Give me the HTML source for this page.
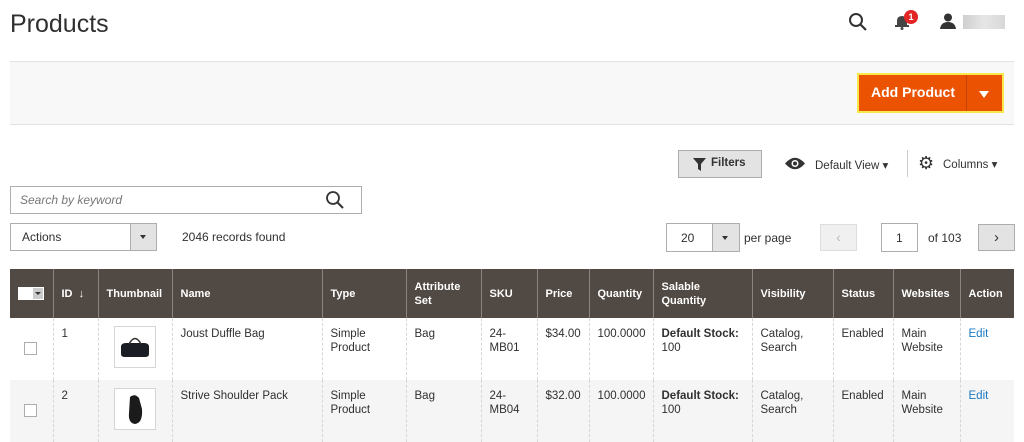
<!DOCTYPE html>
<html><head><meta charset="utf-8"><style>
*{box-sizing:border-box;margin:0;padding:0}
body{width:1024px;height:442px;overflow:hidden;background:#fff;font-family:"Liberation Sans",sans-serif;color:#303030;position:relative;font-size:12px}
.a{position:absolute}
.box{position:absolute;border:1px solid #adadad;background:#fff}
table{position:absolute;left:10px;top:269px;width:1004px;border-collapse:collapse;table-layout:fixed}
th{background:#514943;color:#fff;font-weight:bold;font-size:11px;text-align:left;padding:0 8px;height:49px;border-left:1px solid #8a837f;line-height:14px}
th:first-child{border-left:none}
td{font-size:11.5px;vertical-align:top;padding:9px 8px;height:62px;border-left:1px dashed #d6d6d6;line-height:14px;color:#303030}
td:first-child{border-left:none}
tr.r2 td{background:#f5f5f5}
.cb{width:13px;height:13px;border:1px solid #adadad;background:#fff;margin:16px 0 0 8px}
.th{width:42px;height:42px;border:1px solid #d6d6d6;background:#fff;margin-left:8px;position:relative}
</style></head><body>
<div class="a" style="left:10px;top:10px;font-size:25px;color:#303030">Products</div>
<svg class="a" style="left:848px;top:12px" width="20" height="20" viewBox="0 0 20 20"><circle cx="8" cy="8" r="6" fill="none" stroke="#333" stroke-width="2"/><line x1="12.5" y1="12.5" x2="18" y2="18" stroke="#333" stroke-width="2.2"/></svg>
<svg class="a" style="left:894px;top:14px" width="16" height="16" viewBox="0 0 16 16"><path d="M3 12 L3 7 Q3 2 8 2 Q13 2 13 7 L13 12 Z" fill="#444"/><rect x="1" y="11" width="14" height="2" fill="#444"/><circle cx="8" cy="14.5" r="1.5" fill="#444"/></svg>
<div class="a" style="left:904px;top:10px;width:14px;height:14px;border-radius:7px;background:#e22626;color:#fff;font-size:9px;font-weight:bold;text-align:center;line-height:14px">1</div>
<svg class="a" style="left:940px;top:13px" width="16" height="16" viewBox="0 0 16 16"><circle cx="8" cy="4.5" r="4" fill="#333"/><path d="M0 16 Q1 9 8 9 Q15 9 16 16Z" fill="#333"/></svg>
<div class="a" style="left:963px;top:15px;width:42px;height:14px;background:linear-gradient(90deg,#cfcfcf,#e6e6e6 50%,#d8d8d8)"></div>
<div class="a" style="left:10px;top:61px;width:1004px;height:64px;background:#f8f8f8;border-top:1px solid #e3e3e3;border-bottom:1px solid #e3e3e3"></div>
<div class="a" style="left:857px;top:73px;width:147px;height:40px;background:#eb5202;border:2px solid #f9e84a"></div>
<div class="a" style="left:871px;top:84px;color:#fff;font-weight:bold;font-size:14px">Add Product</div>
<div class="a" style="left:966px;top:75px;width:1px;height:36px;background:#c04500"></div>
<div class="a" style="left:979px;top:91px;border-left:5px solid transparent;border-right:5px solid transparent;border-top:7px solid #fff"></div>
<div class="a" style="left:678px;top:150px;width:84px;height:28px;background:#e3e3e3;border:1px solid #adadad"></div>
<svg class="a" style="left:693px;top:158px" width="13" height="13" viewBox="0 0 13 13"><path d="M0 0H13L8 6V13L5 11V6Z" fill="#333"/></svg>
<div class="a" style="left:711px;top:157px;font-size:11.5px;font-weight:bold;color:#333">Filters</div>
<svg class="a" style="left:785px;top:157px" width="20" height="13" viewBox="0 0 20 13"><path d="M0 6.5Q10 -5 20 6.5Q10 18 0 6.5Z" fill="#333"/><circle cx="10" cy="6.5" r="3.5" fill="#fff"/><circle cx="10" cy="6.5" r="2" fill="#333"/></svg>
<div class="a" style="left:815px;top:158px;font-size:11.5px;color:#333">Default View ▾</div>
<div class="a" style="left:907px;top:150px;width:1px;height:27px;background:#ccc"></div>
<div class="a" style="left:918px;top:153px;font-size:18px;color:#333;line-height:20px">⚙</div>
<div class="a" style="left:943px;top:157px;font-size:11.5px;color:#333">Columns ▾</div>
<div class="box" style="left:10px;top:186px;width:352px;height:28px"></div>
<div class="a" style="left:20px;top:193px;font-style:italic;color:#777;font-size:12px">Search by keyword</div>
<svg class="a" style="left:325px;top:190px" width="20" height="20" viewBox="0 0 20 20"><circle cx="8" cy="8" r="6" fill="none" stroke="#333" stroke-width="1.8"/><line x1="12.5" y1="12.5" x2="18" y2="18" stroke="#333" stroke-width="2"/></svg>
<div class="box" style="left:10px;top:223px;width:147px;height:28px"></div>
<div class="a" style="left:130px;top:224px;width:26px;height:26px;background:#e3e3e3;border-left:1px solid #adadad"></div>
<div class="a" style="left:22px;top:230px;font-size:12px">Actions</div>
<div class="a" style="left:140px;top:235px;border-left:3.5px solid transparent;border-right:3.5px solid transparent;border-top:4px solid #333"></div>
<div class="a" style="left:182px;top:230px;font-size:12px">2046 records found</div>
<div class="box" style="left:666px;top:223px;width:74px;height:29px"></div>
<div class="a" style="left:712px;top:224px;width:27px;height:27px;background:#e3e3e3;border-left:1px solid #adadad"></div>
<div class="a" style="left:681px;top:231px;font-size:12px">20</div>
<div class="a" style="left:722px;top:236px;border-left:3.5px solid transparent;border-right:3.5px solid transparent;border-top:4px solid #333"></div>
<div class="a" style="left:744px;top:231px;font-size:12px">per page</div>
<div class="a" style="left:820px;top:224px;width:37px;height:27px;background:#f0f0f0;border:1px solid #ddd;color:#bbb;text-align:center;line-height:25px;font-size:14px">&lsaquo;</div>
<div class="box" style="left:881px;top:223px;width:37px;height:29px"></div>
<div class="a" style="left:896px;top:231px;font-size:12px">1</div>
<div class="a" style="left:928px;top:231px;font-size:12px">of 103</div>
<div class="a" style="left:978px;top:224px;width:37px;height:27px;background:#e3e3e3;border:1px solid #adadad;color:#333;text-align:center;line-height:25px;font-size:15px">&rsaquo;</div>
<table>
<colgroup><col style="width:43px"><col style="width:45px"><col style="width:74px"><col style="width:150px"><col style="width:84px"><col style="width:75px"><col style="width:56px"><col style="width:52px"><col style="width:64px"><col style="width:99px"><col style="width:81px"><col style="width:60px"><col style="width:67px"><col style="width:54px"></colgroup>
<tr><th><span style="display:inline-block;width:26px;height:13px;background:#fff;position:relative;vertical-align:middle"><span style="position:absolute;right:1px;top:1px;width:10px;height:11px;background:#ccc"></span><span style="position:absolute;right:3px;top:5px;border-left:3px solid transparent;border-right:3px solid transparent;border-top:3px solid #333"></span></span></th><th>ID &nbsp;↓</th><th>Thumbnail</th><th>Name</th><th>Type</th><th>Attribute Set</th><th>SKU</th><th>Price</th><th>Quantity</th><th>Salable Quantity</th><th>Visibility</th><th>Status</th><th>Websites</th><th>Action</th></tr>
<tr><td style="padding:0"><div class="cb" style="margin-top:24px;margin-left:14px"></div></td><td>1</td><td style="padding:0"><div class="th" style="margin:8px 0 0 15px"><svg width="40" height="40" viewBox="0 0 40 40"><path d="M6 20Q6 16 11 16H29Q34 16 34 20V27Q34 30 30 30H10Q6 30 6 27Z" fill="#1b1d25"/><path d="M14 17Q20 6 26 17" fill="none" stroke="#333" stroke-width="1.5"/></svg></div></td><td>Joust Duffle Bag</td><td>Simple Product</td><td>Bag</td><td>24-<br>MB01</td><td>$34.00</td><td>100.0000</td><td><b>Default Stock:</b><br>100</td><td>Catalog, Search</td><td>Enabled</td><td>Main Website</td><td style="color:#1979c3">Edit</td></tr>
<tr class="r2"><td style="padding:0"><div class="cb" style="margin-top:24px;margin-left:14px"></div></td><td>2</td><td style="padding:0"><div class="th" style="margin:8px 0 0 15px"><svg width="40" height="40" viewBox="0 0 40 40"><path d="M15 8Q20 4 24 9L27 20Q28 34 20 35Q13 34 14 24Z" fill="#1b1b1b"/></svg></div></td><td>Strive Shoulder Pack</td><td>Simple Product</td><td>Bag</td><td>24-<br>MB04</td><td>$32.00</td><td>100.0000</td><td><b>Default Stock:</b><br>100</td><td>Catalog, Search</td><td>Enabled</td><td>Main Website</td><td style="color:#1979c3">Edit</td></tr>
</table>
</body></html>
